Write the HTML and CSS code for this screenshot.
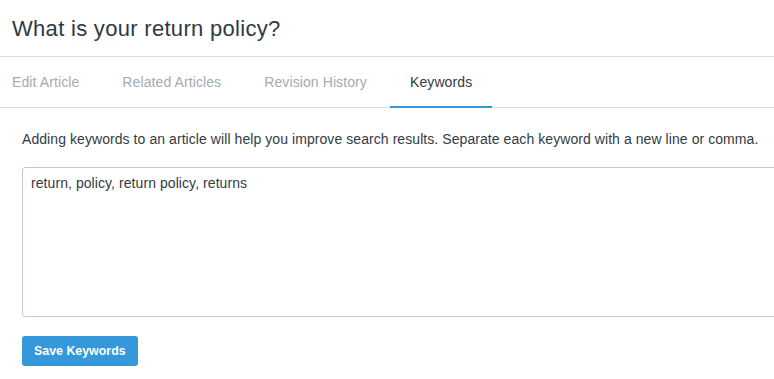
FILE: index.html
```html
<!DOCTYPE html>
<html lang="en">
<head>
  <meta charset="UTF-8" />
  <meta name="viewport" content="width=device-width, initial-scale=1.0"/>
  <title>What is your return policy?</title>
  <link rel="stylesheet" href="styles.css">
</head>
<body>
  <!-- Judul artikel -->
  <header class="article-header">
    <h1>What is your return policy?</h1>
  </header>

  <!-- Tab navigasi -->
  <nav class="tabs">
    <a class="tab" href="#">Edit Article</a>
    <a class="tab" href="#">Related Articles</a>
    <a class="tab" href="#">Revision History</a>
    <a class="tab active" href="#">Keywords</a>
  </nav>

  <!-- Form keywords -->
  <div class="keywords-panel">
    <p class="help-text">Adding keywords to an article will help you improve search results. Separate each keyword with a new line or comma.</p>
    <textarea class="keywords-input" id="keywords">return, policy, return policy, returns</textarea>
    <button class="save-btn" type="button">Save Keywords</button>
  </div>
</body>
</html>
```

FILE: styles.css
```css
body {
  font-family: 'Liberation Sans', Arial, sans-serif;
  background-color: #fff;
  color: #333b44;
  margin: 0;
  overflow-x: hidden;
}
.article-header {
  height: 56px;
  border-bottom: 1px solid #dcdfe2;
  display: flex;
  align-items: center;
  padding-left: 12px;
}
h1 {
  margin: 0;
  font-size: 22px;
  font-weight: normal;
  letter-spacing: 0.3px;
  color: #2f3943;
  padding-top: 2px;
}
.tabs {
  display: flex;
  gap: 3px;
  height: 50px;
  border-bottom: 1px solid #dcdfe2;
  padding-left: 12px;
}
.tab {
  display: flex;
  align-items: center;
  padding: 0 20px;
  font-size: 14px;
  letter-spacing: 0.1px;
  color: #a3abb4;
  text-decoration: none;
  border-bottom: 2px solid transparent;
  margin-bottom: -1px;
  padding-top: 1px;
}
.tab:first-child {
  padding-left: 0;
}
.tab.active {
  color: #333b44;
  border-bottom-color: #3498db;
}
.keywords-panel {
  padding: 0 0 0 22px;
}
.help-text {
  margin: 22px 0 0;
  font-size: 14px;
  line-height: 18px;
  letter-spacing: 0.07px;
}
.keywords-input {
  display: block;
  box-sizing: border-box;
  width: calc(100% + 20px);
  height: 150px;
  margin-top: 19px;
  padding: 7px 8px;
  border: 1px solid #c2cbd3;
  border-radius: 3px;
  font-family: 'Liberation Sans', Arial, sans-serif;
  font-size: 14px;
  letter-spacing: 0.07px;
  color: #333b44;
  resize: none;
  outline: none;
}
.save-btn {
  margin-top: 19px;
  background-color: #3498db;
  color: white;
  border: none;
  border-radius: 3px;
  height: 30px;
  padding: 0 12px;
  font-family: 'Liberation Sans', Arial, sans-serif;
  font-size: 12.4px;
  font-weight: bold;
  cursor: pointer;
}
.save-btn:hover {
  background-color: #2a86c5;
}
```
